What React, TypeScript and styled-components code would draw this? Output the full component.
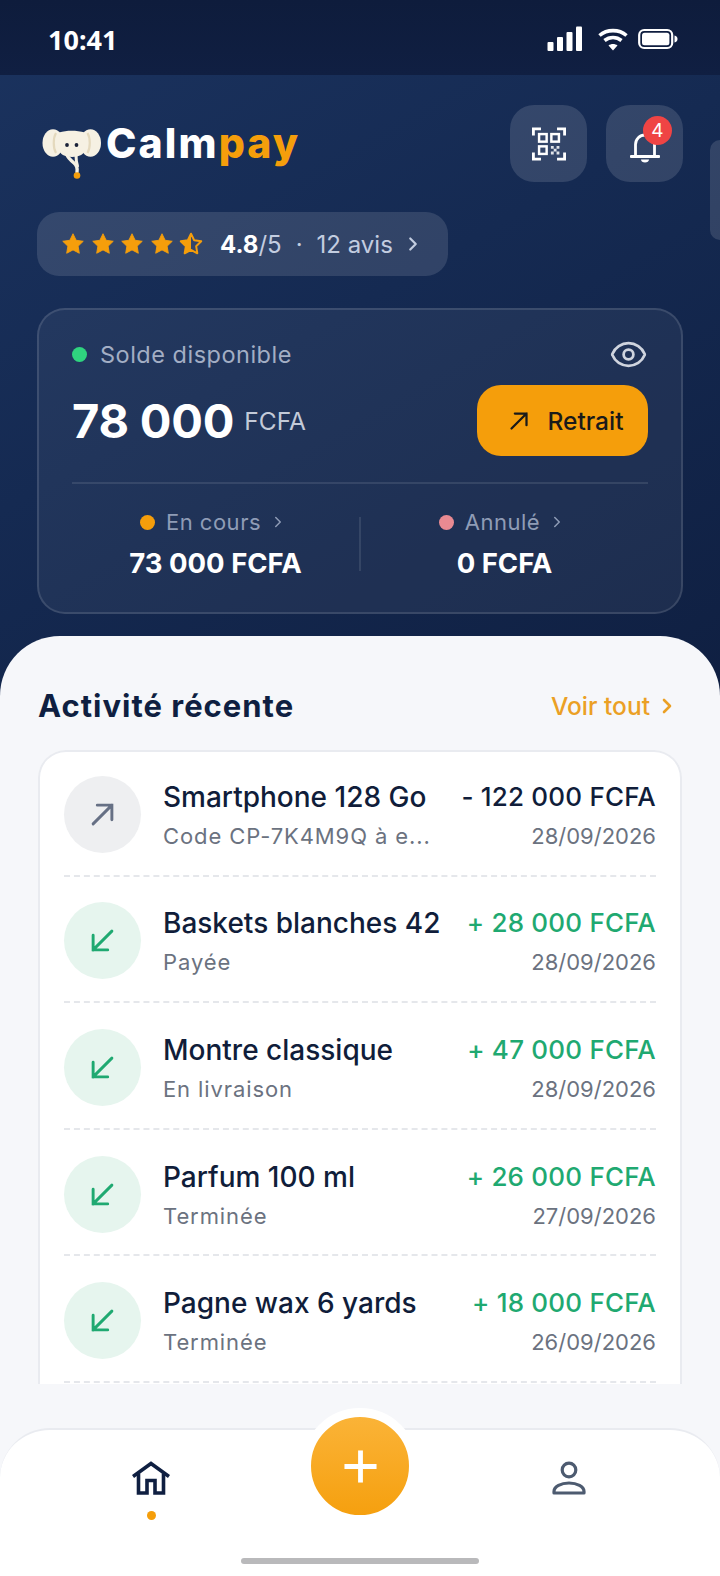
import styled, { createGlobalStyle } from "styled-components";
import { ChevronRight, Eye, Plus } from "lucide-react";

const GlobalStyle = createGlobalStyle`
    html, body { margin: 0; padding: 0; background: #f6f7fa; }
    * { box-sizing: border-box; }
`;

const Screen = styled.div`
    position: relative;
    width: 720px;
    height: 1576px;
    overflow: hidden;
    display: flex;
    flex-direction: column;
    font-family: Inter, "Liberation Sans", sans-serif;
    background: linear-gradient(150deg, #1b335f 0%, #152a52 45%, #0f1f41 100%) no-repeat;
    background-size: 100% 720px;
`;

const StatusBar = styled.div`
    height: 75px;
    flex: none;
    display: flex;
    align-items: center;
    justify-content: space-between;
    padding: 3px 42px 0 48px;
    background: linear-gradient(180deg, #0e1c3c, #101f42);
    color: #fff;
    font-size: 27px;
    font-weight: 700;
    font-family: "Noto Sans", sans-serif;
`;

const StatusIcons = styled.div`
    display: flex;
    align-items: center;
    gap: 10px;
    svg:first-child { margin-right: 5px; }
`;

const Hero = styled.div`
    flex: none;
    height: 561px;
    padding: 30px 37px 0 37px;
    display: flex;
    flex-direction: column;
`;

const TopRow = styled.div`
    display: flex;
    align-items: flex-start;
    justify-content: space-between;
`;

const Brand = styled.div`
    display: flex;
    align-items: flex-start;
    gap: 4px;
    padding: 24px 0 0 5px;
`;

const BrandName = styled.div`
    font-size: 41px;
    line-height: 44px;
    font-weight: 800;
    letter-spacing: 2.1px;
    color: #fff;
    margin-top: -8px;
    span { color: #f59e0b; }
`;

const TopActions = styled.div`
    display: flex;
    gap: 19px;
`;

const IconButton = styled.div`
    position: relative;
    width: 77px;
    height: 77px;
    border-radius: 24px;
    background: rgba(255, 255, 255, 0.13);
    display: flex;
    align-items: center;
    justify-content: center;
`;

const Badge = styled.div`
    position: absolute;
    top: 11px;
    left: 37px;
    width: 29px;
    height: 29px;
    border-radius: 50%;
    background: #ef4444;
    color: #fff;
    font-size: 19px;
    display: flex;
    align-items: center;
    justify-content: center;
`;

const EdgeTab = styled.div`
    position: absolute;
    top: 140px;
    right: 0;
    width: 10px;
    height: 100px;
    border-radius: 10px 0 0 10px;
    background: rgba(255, 255, 255, 0.13);
`;

const RatingPill = styled.div`
    margin-top: 30px;
    width: 411px;
    height: 64px;
    border-radius: 22px;
    background: rgba(255, 255, 255, 0.12);
    display: flex;
    align-items: center;
    padding: 0 24px;
    color: #c3cde0;
    font-size: 24px;
`;

const Stars = styled.div`
    display: flex;
    gap: 5.5px;
    margin-right: 17px;
`;

const RatingValue = styled.span`
    color: #fff;
    font-weight: 700;
`;

const RatingDot = styled.span`
    margin: 0 14px;
`;

const BalanceCard = styled.div`
    margin-top: 32px;
    height: 306px;
    border-radius: 28px;
    border: 2px solid rgba(255, 255, 255, 0.12);
    background: rgba(255, 255, 255, 0.055);
    padding: 26px 33px 0 33px;
    display: flex;
    flex-direction: column;
`;

const BalanceHead = styled.div`
    display: flex;
    align-items: center;
    justify-content: space-between;
    height: 36px;
`;

const BalanceLabel = styled.div`
    display: flex;
    align-items: center;
    gap: 13px;
    font-size: 23.5px;
    letter-spacing: 0.5px;
    color: #a3aec4;
`;

const Dot = styled.span<{ $color: string; $size?: number }>`
    display: inline-block;
    flex: none;
    width: ${(p) => p.$size ?? 15}px;
    height: ${(p) => p.$size ?? 15}px;
    border-radius: 50%;
    background: ${(p) => p.$color};
`;

const BalanceRow = styled.div`
    display: flex;
    align-items: center;
    justify-content: space-between;
    margin-top: 13px;
    padding-bottom: 26px;
    border-bottom: 2px solid rgba(255, 255, 255, 0.1);
`;

const Amount = styled.div`
    display: flex;
    align-items: center;
    gap: 10px;
    color: #fff;
    font-size: 47px;
    font-weight: 700;
    letter-spacing: -0.2px;
`;

const Currency = styled.span`
    font-size: 24.5px;
    font-weight: 400;
    letter-spacing: 0;
    color: #c3cad8;
`;

const WithdrawButton = styled.div`
    width: 171px;
    height: 71px;
    border-radius: 24px;
    background: #f59e0b;
    color: #1a1a1a;
    font-size: 24.5px;
    font-weight: 500;
    display: flex;
    align-items: center;
    justify-content: center;
    gap: 18px;
    padding-left: 8px;
`;

const BalanceStats = styled.div`
    display: grid;
    grid-template-columns: 1fr 2px 1fr;
    margin-top: 23px;
`;

const Stat = styled.div`
    display: flex;
    flex-direction: column;
    align-items: center;
    gap: 9px;
`;

const StatLabel = styled.div`
    display: flex;
    align-items: center;
    gap: 11px;
    color: #8f9cb6;
    font-size: 22px;
    letter-spacing: 0.5px;
    height: 30px;
    padding-right: 4px;
    svg { margin-left: -3px; }
`;

const StatValue = styled.div`
    color: #fff;
    font-size: 27.5px;
    font-weight: 700;
    line-height: 34px;
`;

const StatDivider = styled.div`
    width: 2px;
    height: 54px;
    margin-top: 10px;
    background: rgba(255, 255, 255, 0.1);
`;

const Sheet = styled.div`
    flex: 1;
    min-height: 0;
    background: #f6f7fa;
    border-radius: 60px 60px 0 0;
    display: flex;
    flex-direction: column;
    padding: 0 38px;
`;

const SectionHead = styled.div`
    height: 114px;
    flex: none;
    display: flex;
    align-items: center;
    justify-content: space-between;
    padding: 25px 3px 0 0;
`;

const SectionTitle = styled.div`
    font-size: 31px;
    font-weight: 700;
    color: #0f1f41;
    letter-spacing: 1px;
`;

const SeeAll = styled.div`
    display: flex;
    align-items: center;
    gap: 5px;
    color: #eba024;
    font-size: 24.5px;
    font-weight: 500;
`;

const ListClip = styled.div`
    height: 634px;
    flex: none;
    overflow: hidden;
`;

const List = styled.div`
    min-height: 720px;
    background: #fff;
    box-shadow: inset 0 0 0 2px #e9ebf0;
    border-radius: 28px;
    padding: 0 26px;
`;

const Row = styled.div`
    height: 126.6px;
    padding-top: 4px;
    display: flex;
    align-items: center;
    gap: 22px;
    border-bottom: 2px dashed #e5e7eb;
`;

const Avatar = styled.div<{ $in: boolean }>`
    width: 77px;
    height: 77px;
    flex: none;
    border-radius: 50%;
    display: flex;
    align-items: center;
    justify-content: center;
    background: ${(p) => (p.$in ? "#e6f5ee" : "#eeeff1")};
    color: ${(p) => (p.$in ? "#1fa971" : "#667085")};
`;

const RowMain = styled.div`
    flex: 1;
    min-width: 0;
    margin-top: 2px;
`;

const RowSide = styled.div`
    flex: none;
    text-align: right;
    margin-top: 2px;
`;

const RowTitle = styled.div`
    font-size: 28px;
    line-height: 34px;
    font-weight: 500;
    color: #101d3a;
    white-space: nowrap;
`;

const RowAmount = styled.div<{ $in: boolean }>`
    font-size: 26px;
    line-height: 34px;
    font-weight: 500;
    letter-spacing: 0.2px;
    color: ${(p) => (p.$in ? "#1fa971" : "#101d3a")};
    white-space: nowrap;
`;

const RowSub = styled.div`
    margin-top: 7px;
    font-size: 22px;
    line-height: 30px;
    letter-spacing: 0.9px;
    color: #6b7280;
    white-space: nowrap;
`;

const RowDate = styled(RowSub)`
    letter-spacing: 0;
`;

const BottomNav = styled.div`
    position: absolute;
    left: 0;
    right: 0;
    bottom: 0;
    height: 148px;
    background: #fff;
    border-top: 2px solid #e9ebf0;
    border-radius: 50px 50px 0 0;
    display: grid;
    grid-template-columns: 302px 116px 302px;
    justify-items: center;
`;

const NavItem = styled.div`
    padding-top: 31px;
    display: flex;
    flex-direction: column;
    align-items: center;
    gap: 16px;
`;

const Fab = styled.div`
    position: absolute;
    left: 302px;
    top: -22px;
    width: 116px;
    height: 116px;
    border-radius: 50%;
    border: 9px solid #fff;
    background: linear-gradient(180deg, #fbb53b, #f59e0b);
    background-origin: border-box;
    color: #fff;
    display: flex;
    align-items: center;
    justify-content: center;
`;

const HomeBar = styled.div`
    position: absolute;
    left: 241px;
    bottom: 12px;
    width: 238px;
    height: 6px;
    border-radius: 3px;
    background: #b9b9bb;
`;

function Star({ half }: { half?: boolean }) {
    const d = "M11 1.6l2.9 6 6.5.9-4.7 4.5 1.1 6.5L11 16.4l-5.8 3.1 1.1-6.5L1.6 8.5l6.5-.9z";
    return (
        <svg width="24" height="24" viewBox="0 0 22 22">
            {half ? (
                <>
                    <path d={d} fill="none" stroke="#f59e0b" strokeWidth="1.8" strokeLinejoin="round" />
                    <path d="M11 1.6v14.8l-5.8 3.1 1.1-6.5L1.6 8.5l6.5-.9z" fill="#f59e0b" />
                </>
            ) : (
                <path d={d} fill="#f59e0b" strokeLinejoin="round" stroke="#f59e0b" strokeWidth="0.8" />
            )}
        </svg>
    );
}

function Arrow({ down, size, stroke }: { down?: boolean; size: number; stroke: number }) {
    return (
        <svg width={size} height={size} viewBox="0 0 24 24" fill="none" stroke="currentColor" strokeWidth={stroke} strokeLinecap="round">
            {down ? <path d="M21 3L3 21M3 7v14h14" /> : <path d="M3 21L21 3M7 3h14v14" />}
        </svg>
    );
}

const rows = [
    { id: 1, name: "Smartphone 128 Go", sub: "Code CP-7K4M9Q à e...", amount: "- 122 000 FCFA", date: "28/09/2026", income: false },
    { id: 2, name: "Baskets blanches 42", sub: "Payée", amount: "+ 28 000 FCFA", date: "28/09/2026", income: true },
    { id: 3, name: "Montre classique", sub: "En livraison", amount: "+ 47 000 FCFA", date: "28/09/2026", income: true },
    { id: 4, name: "Parfum 100 ml", sub: "Terminée", amount: "+ 26 000 FCFA", date: "27/09/2026", income: true },
    { id: 5, name: "Pagne wax 6 yards", sub: "Terminée", amount: "+ 18 000 FCFA", date: "26/09/2026", income: true },
];

function App() {
    return (
        <Screen>
            <GlobalStyle />
            <StatusBar>
                <span>10:41</span>
                <StatusIcons>
                    <svg width="36" height="26" viewBox="0 0 36 26" fill="#fff">
                        <rect x="0.5" y="16" width="6" height="9" rx="1" />
                        <rect x="10" y="11" width="6" height="14" rx="1" />
                        <rect x="19.5" y="6" width="6" height="19" rx="1" />
                        <rect x="29" y="0.5" width="6" height="24.5" rx="1" />
                    </svg>
                    <svg width="30" height="26" viewBox="0 0 30 26" fill="none" stroke="#fff" strokeWidth="3.6">
                        <path d="M1.5 9.5C9 3 21 3 28.5 9.5" />
                        <path d="M6.5 14.5C11.5 10.500 18.500 10.500 23.500 14.500" />
                        <path d="M15 24.500l-4.500-5c2.600-2 6.400-2 9 0z" fill="#fff" stroke="none" />
                    </svg>
                    <svg width="40" height="22" viewBox="0 0 40 22" fill="none">
                        <rect x="1.2" y="2" width="33" height="18" rx="5" stroke="#fff" strokeWidth="2.2" />
                        <rect x="4" y="4.800" width="27.400" height="12.400" rx="2.500" fill="#fff" />
                        <path d="M36.500 7.500c2 .4 3 1.800 3 3.500s-1 3.100-3 3.500z" fill="#fff" />
                    </svg>
                </StatusIcons>
            </StatusBar>

            <Hero>
                <TopRow>
                    <Brand>
                        <svg width="60" height="53" viewBox="0 0 60 53">
                            <ellipse cx="11" cy="14" rx="10.500" ry="13.800" fill="#f6f1e3" />
                            <ellipse cx="48.500" cy="14" rx="10.500" ry="13.800" fill="#f6f1e3" />
                            <path d="M17 3.500c8-2.500 17-2.500 26 0V20c0 5-6 8-13 8s-13-3-13-8z" fill="#f6f1e3" />
                            <path d="M14 4c-3 5-3 15 0 20M45.500 4c3 5 3 15 0 20" fill="none" stroke="#e4d9bd" strokeWidth="2.200" />
                            <path d="M25 26c1 3 4 5.500 7 8s3.500 6 3 9" fill="none" stroke="#f6f1e3" strokeWidth="3.400" strokeLinecap="round" />
                            <path d="M34 26c0 4 .5 8 1.500 11" fill="none" stroke="#f6f1e3" strokeWidth="3" strokeLinecap="round" />
                            <circle cx="35" cy="46.500" r="3.300" fill="#f59e0b" />
                            <circle cx="25" cy="16" r="1.900" fill="#1a2238" />
                            <circle cx="34.500" cy="16" r="1.900" fill="#1a2238" />
                        </svg>
                        <BrandName>Calm<span>pay</span></BrandName>
                    </Brand>
                    <TopActions>
                        <IconButton>
                            <svg width="34" height="34" viewBox="0 0 36 36" fill="none" stroke="#fff" strokeWidth="2.600">
                                <path d="M1.500 9V2h8M26.500 2h8v7M1.500 27v7h8M26.500 34h8v-7" strokeWidth="3" />
                                <rect x="7.500" y="7.500" width="8" height="8" />
                                <rect x="20.500" y="7.500" width="8" height="8" />
                                <rect x="7.500" y="20.500" width="8" height="8" />
                                <path d="M20 20h3v3h-3zM26 20h3v3h-3zM23 23h3v3h-3zM20 26h3v3h-3zM26 26h3v3h-3z" fill="#fff" stroke="none" opacity="0.85" />
                            </svg>
                        </IconButton>
                        <IconButton>
                            <svg width="30" height="32" viewBox="0 0 30 32" fill="none" stroke="#fff" strokeWidth="2.800" style={{ marginTop: 6 }}>
                                <path d="M5.500 25V13.500a9.500 9.500 0 0 1 19 0V25" />
                                <path d="M1 25.500h28" strokeLinecap="round" />
                                <path d="M11 28.500h8c0 2-1.800 3-4 3s-4-1-4-3z" fill="#fff" stroke="none" />
                            </svg>
                            <Badge>4</Badge>
                        </IconButton>
                    </TopActions>
                </TopRow>
                <RatingPill>
                    <Stars>
                        <Star />
                        <Star />
                        <Star />
                        <Star />
                        <Star half />
                    </Stars>
                    <RatingValue>4.8</RatingValue>/5
                    <RatingDot>·</RatingDot>
                    12 avis
                    <ChevronRight size={22} strokeWidth={2.400} style={{ marginLeft: 9 }} />
                </RatingPill>

                <BalanceCard>
                    <BalanceHead>
                        <BalanceLabel>
                            <Dot $color="#2fd47f" />
                            Solde disponible
                        </BalanceLabel>
                        <Eye size={39} color="#cfd4de" strokeWidth={1.700} />
                    </BalanceHead>
                    <BalanceRow>
                        <Amount>
                            78 000 <Currency>FCFA</Currency>
                        </Amount>
                        <WithdrawButton>
                            <Arrow size={20} stroke={2.700} />
                            Retrait
                        </WithdrawButton>
                    </BalanceRow>
                    <BalanceStats>
                        <Stat>
                            <StatLabel>
                                <Dot $color="#f59e0b" />
                                En cours
                                <ChevronRight size={18} />
                            </StatLabel>
                            <StatValue>73 000 FCFA</StatValue>
                        </Stat>
                        <StatDivider />
                        <Stat>
                            <StatLabel>
                                <Dot $color="#e98a92" />
                                Annulé
                                <ChevronRight size={18} />
                            </StatLabel>
                            <StatValue>0 FCFA</StatValue>
                        </Stat>
                    </BalanceStats>
                </BalanceCard>
            </Hero>

            <Sheet>
                <SectionHead>
                    <SectionTitle>Activité récente</SectionTitle>
                    <SeeAll>
                        Voir tout
                        <ChevronRight size={24} strokeWidth={2.600} />
                    </SeeAll>
                </SectionHead>
                <ListClip>
                    <List>
                        {rows.map((item) => (
                            <Row key={item.id}>
                                <Avatar $in={item.income}>
                                    <Arrow down={item.income} size={25} stroke={2.800} />
                                </Avatar>
                                <RowMain>
                                    <RowTitle>{item.name}</RowTitle>
                                    <RowSub>{item.sub}</RowSub>
                                </RowMain>
                                <RowSide>
                                    <RowAmount $in={item.income}>{item.amount}</RowAmount>
                                    <RowDate>{item.date}</RowDate>
                                </RowSide>
                            </Row>
                        ))}
                    </List>
                </ListClip>
            </Sheet>

            <EdgeTab />

            <BottomNav>
                <NavItem>
                    <svg width="38" height="34" viewBox="0 0 38 34" fill="none" stroke="#0f1f41" strokeWidth="3.600">
                        <path d="M1 15.500L19 2.500l18 13" />
                        <path d="M6.500 12.500V32h8.500V19.500h8V32h8.500V12.500" />
                    </svg>
                    <Dot $color="#f59e0b" $size={9} />
                </NavItem>
                <div />
                <NavItem>
                    <svg width="34" height="34" viewBox="0 0 34 34" fill="none" stroke="#4d5b70" strokeWidth="3.200">
                        <circle cx="17" cy="9" r="6.800" />
                        <path d="M2 32v-1.500c0-5 7-8.500 15-8.500s15 3.500 15 8.500V32z" strokeLinejoin="round" />
                    </svg>
                </NavItem>
                <Fab>
                    <Plus size={55} strokeWidth={2.100} strokeLinecap="butt" />
                </Fab>
            </BottomNav>
            <HomeBar />
        </Screen>
    );
}

export default App;
